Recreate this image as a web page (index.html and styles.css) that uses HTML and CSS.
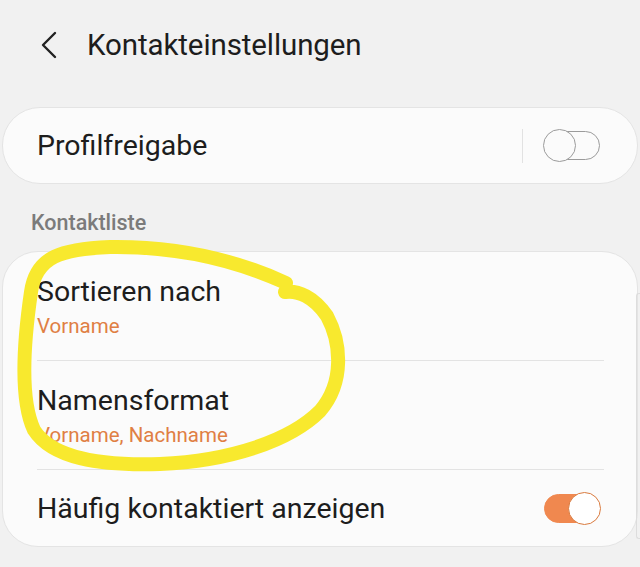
FILE: index.html
```html
<!DOCTYPE html>
<html lang="de">
<head>
  <meta charset="UTF-8" />
  <meta name="viewport" content="width=device-width, initial-scale=1.0" />
  <title>Kontakteinstellungen</title>
  <link rel="stylesheet" href="styles.css">
</head>
<body>
  <header class="topbar">
    <button class="back" aria-label="Zurück">
      <svg width="18" height="28" viewBox="0 0 18 28">
        <path d="M15 2 L3 14 L15 26" fill="none" stroke="#222" stroke-width="2.4" stroke-linecap="round" stroke-linejoin="round"/>
      </svg>
    </button>
    <h1 class="title">Kontakteinstellungen</h1>
  </header>

  <section class="card card-single">
    <span class="item-title">Profilfreigabe</span>
    <div class="switch-wrap">
      <span class="vdivider"></span>
      <span class="switch"><span class="knob"></span></span>
    </div>
  </section>

  <h2 class="section-label">Kontaktliste</h2>

  <section class="card card-list">
    <div class="row row-two">
      <span class="item-title">Sortieren nach</span>
      <span class="item-sub">Vorname</span>
    </div>
    <div class="row row-two">
      <span class="item-title">Namensformat</span>
      <span class="item-sub">Vorname, Nachname</span>
    </div>
    <div class="row row-one">
      <span class="item-title">Häufig kontaktiert anzeigen</span>
      <span class="switch on"><span class="knob"></span></span>
    </div>
  </section>

  <div class="scrollbar"></div>

  <svg class="scribble" width="640" height="567" viewBox="0 0 640 567">
    <path d="M286 283 C240 262, 180 246, 110 247 C62 249, 36 256, 31 292 C24 340, 19 398, 34 430 C52 458, 98 466, 160 464 C230 461, 290 441, 320 411 C345 382, 341 342, 327 316 C314 297, 298 290, 285 292"
          fill="none" stroke="#f8e92e" stroke-width="14" stroke-linecap="round" stroke-linejoin="round"/>
  </svg>
</body>
</html>
```

FILE: styles.css
```css
body {
  margin: 0;
  background-color: #f1f1f1;
  color: #1d1d1d;
  font-family: Roboto, 'Noto Sans', sans-serif;
  position: relative;
  height: 567px;
  overflow: hidden;
}
.topbar {
  height: 90px;
  display: flex;
  align-items: center;
  padding-left: 40px;
}
.back {
  background: none;
  border: none;
  padding: 0;
  width: 22px;
  height: 30px;
  display: flex;
  align-items: center;
  margin-right: 25px;
}
.title {
  margin: 0;
  font-size: 29.5px;
  font-weight: 400;
  letter-spacing: -0.1px;
}
.card {
  background-color: #fbfbfb;
  border: 1px solid #e4e4e4;
  margin: 0 2px;
  box-sizing: border-box;
}
.card-single {
  margin-top: 17px;
  height: 77px;
  border-radius: 38px;
  padding: 0 37px 0 34px;
  display: flex;
  align-items: center;
  justify-content: space-between;
}
.item-title {
  font-size: 28.5px;
  line-height: 30px;
}
.item-sub {
  font-size: 20.5px;
  line-height: 24px;
  color: #e07f44;
}
.switch-wrap {
  display: flex;
  align-items: center;
}
.vdivider {
  width: 1px;
  height: 34px;
  background-color: #e2e2e2;
  margin-right: 21px;
}
.switch {
  position: relative;
  width: 56px;
  height: 29px;
  border: 1.6px solid #9b9b9b;
  border-radius: 16px;
  box-sizing: border-box;
}
.switch .knob {
  position: absolute;
  left: -2px;
  top: -3px;
  width: 33px;
  height: 33px;
  border: 1.6px solid #9b9b9b;
  border-radius: 50%;
  box-sizing: border-box;
  background-color: #fbfbfb;
}
.switch.on {
  background-color: #f0884f;
  border-color: #f0884f;
}
.switch.on .knob {
  left: auto;
  right: -2px;
  border-color: #d97a3e;
  background-color: #ffffff;
}
.section-label {
  margin: 0;
  height: 67px;
  display: flex;
  align-items: center;
  padding-left: 31px;
  padding-top: 10px;
  box-sizing: border-box;
  font-size: 21.5px;
  font-weight: 500;
  color: #7b7b7b;
}
.card-list {
  border-radius: 36px;
  height: 296px;
  padding: 0 33px 0 34px;
}
.row {
  display: flex;
  box-sizing: border-box;
}
.row-two {
  height: 109px;
  flex-direction: column;
  padding-top: 25px;
  gap: 7px;
  border-bottom: 1px solid #e3e3e3;
}
.row-one {
  height: 77px;
  align-items: center;
  justify-content: space-between;
  padding-right: 4px;
}
.scrollbar {
  position: absolute;
  right: 0;
  top: 293px;
  width: 3px;
  height: 244px;
  border: 1px solid #dddddd;
  border-right: none;
  border-radius: 3px 0 0 3px;
}
.scribble {
  position: absolute;
  left: 0;
  top: 0;
  pointer-events: none;
}
```
